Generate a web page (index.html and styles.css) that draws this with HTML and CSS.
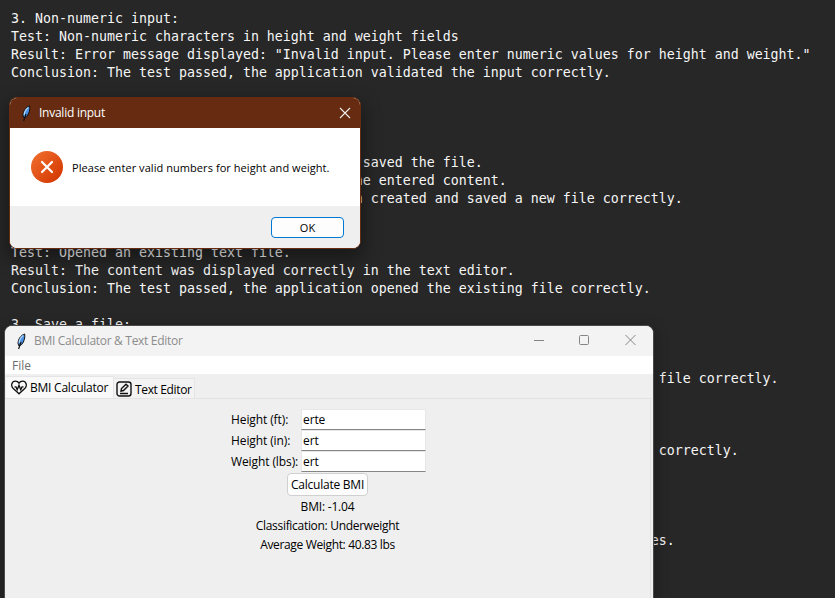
FILE: index.html
```html
<!DOCTYPE html>
<html lang="en">
<head>
<meta charset="utf-8">
<title>BMI Calculator &amp; Text Editor</title>
<link rel="stylesheet" href="styles.css">
</head>
<body>
<svg class="defs" aria-hidden="true">
  <symbol id="feather" viewBox="0 0 10 17">
    <path d="M8.7 1C4.8 2.200 2 6.300 2 10.500L3 13 5.700 11.500C8.300 8.500 9.200 4.500 8.700 1Z" fill="#4a90e2" stroke="#111" stroke-width="1"/>
    <path d="M7.300 2.500C5 4.300 3.300 7 3.200 10" fill="none" stroke="#b4d8fa" stroke-width="1.200"/>
    <path d="M5 9L2.600 16" fill="none" stroke="#111" stroke-width="1.200"/>
  </symbol>
</svg>
<div class="document">
  <p>3. Non-numeric input:</p>
  <p>Test: Non-numeric characters in height and weight fields</p>
  <p>Result: Error message displayed: "Invalid input. Please enter numeric values for height and weight."</p>
  <p>Conclusion: The test passed, the application validated the input correctly.</p>
  <p class="gap4 col44">saved the file.</p>
  <p class="col43">he entered content.</p>
  <p class="col43">n created and saved a new file correctly.</p>
  <p class="gap2">Test: Opened an existing text file.</p>
  <p>Result: The content was displayed correctly in the text editor.</p>
  <p>Conclusion: The test passed, the application opened the existing file correctly.</p>
  <p class="gap1">3. Save a file:</p>
  <p class="gap2 col81">file correctly.</p>
  <p class="gap3 col81">correctly.</p>
  <p class="gap4 col80">es.</p>
</div>

<section class="window dialog">
  <header class="dialog-title">
    <svg class="feather"><use href="#feather"/></svg>
    <span class="t-invalid">Invalid input</span>
    <svg class="close" viewBox="0 0 12 12"><path d="M1 1L11 11M11 1L1 11"/></svg>
  </header>
  <div class="dialog-body">
    <svg class="error" viewBox="0 0 32 32">
      <defs><linearGradient id="g" x1="0" y1="0" x2="1" y2="1"><stop offset=".1" stop-color="#ef6c2b"/><stop offset=".9" stop-color="#d43802"/></linearGradient></defs>
      <circle cx="16" cy="16" r="16" fill="url(#g)"/>
      <path d="M11 11L21 21M21 11L11 21" stroke="#fff" stroke-width="2.200" stroke-linecap="round"/>
    </svg>
    <span class="t-message">Please enter valid numbers for height and weight.</span>
  </div>
  <footer class="dialog-actions"><button class="ok">OK</button></footer>
</section>

<section class="window app">
  <header class="app-title">
    <svg class="feather"><use href="#feather"/></svg>
    <span class="t-app">BMI Calculator &amp; Text Editor</span>
    <svg class="controls" viewBox="0 0 104 12">
      <path d="M1 6.500H11M92.500 1L102.500 11M102.500 1L92.500 11"/>
      <rect x="46.500" y="1.500" width="9" height="9" rx="1"/>
    </svg>
  </header>
  <nav class="menu"><span>File</span></nav>
  <div class="tabs">
    <div class="tab active">
      <svg class="heart" viewBox="0 0 16 15"><path d="M8 13.800L2 8.200C-.5 5.600.8 1.200 4.300 1.200 6 1.200 7.300 2 8 3.200 8.700 2 10 1.200 11.700 1.200 15.200 1.200 16.500 5.600 14 8.200Z"/><path d="M3.500 6.800L5 6.800 6.200 9.800 8 5.200 9.800 9.800 11 6.800H12.500"/></svg>
      <span class="t-calc">BMI Calculator</span>
    </div>
    <div class="tab">
      <svg class="edit" viewBox="0 0 16 16"><rect x="1" y="1" width="14" height="14" rx="2.500"/><path d="M5 10L5.500 7.500 10 3.200 12 5.100 7.500 9.500Z"/><path d="M4 12.500H12"/></svg>
      <span class="t-text">Text Editor</span>
    </div>
  </div>
  <main class="pane">
    <form class="form">
      <div class="row"><label>Height (ft):</label><div class="field">erte</div></div>
      <div class="row"><label>Height (in):</label><div class="field">ert</div></div>
      <div class="row"><label>Weight (lbs):</label><div class="field">ert</div></div>
    </form>
    <button class="calc" type="button">Calculate BMI</button>
    <p class="r-bmi">BMI: -1.04</p>
    <p class="r-class">Classification: Underweight</p>
    <p class="r-avg">Average Weight: 40.83 lbs</p>
  </main>
</section>
</body>
</html>
```
FILE: styles.css
```css
* { box-sizing: border-box; }
body {
  margin: 0;
  width: 835px;
  height: 598px;
  overflow: hidden;
  position: relative;
  background: #272727;
  color: #000;
  font: 12px/16px "Open Sans", sans-serif;
}
.defs { display: none; }
svg { flex: none; }
span, label, p, button { white-space: nowrap; }
.document {
  padding: 10px 0 0 11px;
  color: #f6f6f6;
  font: 13.29px/18px "DejaVu Sans Mono", monospace;
}
.document p { width: max-content; margin: 0; }
.document .gap1 { margin-top: 18px; }
.document .gap2 { margin-top: 36px; }
.document .gap3 { margin-top: 54px; }
.document .gap4 { margin-top: 72px; }
.document .col43 { margin-left: 43ch; }
.document .col44 { margin-left: 44ch; }
.document .col80 { margin-left: 80ch; }
.document .col81 { margin-left: 81ch; }
.window { position: absolute; overflow: hidden; border-radius: 8px; }
.feather { width: 10px; height: 17px; }

.dialog {
  left: 9px;
  top: 97px;
  width: 352px;
  height: 152px;
  border: 1px solid #662b10;
  background: #fff;
  box-shadow: 0 8px 18px 3px rgba(0, 0, 0, .36);
}
.dialog-title {
  display: flex;
  align-items: center;
  height: 30px;
  padding: 0 9px 0 11px;
  background: #662b10;
  color: #fff;
}
.dialog-title span { margin-left: 8px; }
.t-invalid { letter-spacing: -.25px; }
.close { width: 12px; height: 12px; margin: 0 0 1px auto; fill: none; stroke: #eee; stroke-width: 1.1; }
.dialog-body { display: flex; align-items: center; height: 78px; padding-left: 21px; }
.t-message { padding-top: 1px; font-size: 11px; letter-spacing: .06px; }
.error { width: 32px; height: 32px; margin-right: 9px; }
.dialog-actions {
  display: flex;
  justify-content: flex-end;
  height: 42px;
  padding: 11px 16px 0 0;
  background: #efefef;
}
.ok {
  width: 73px;
  height: 21px;
  padding: 0;
  border: 1px solid #0078d4;
  border-radius: 4px;
  background: #fdfdfd;
  color: #000;
  font: 11px/19px "Open Sans", sans-serif;
}

.app {
  left: 4px;
  top: 325px;
  width: 650px;
  height: 290px;
  border: 1px solid #4a4a4a;
  background: #efefef;
  box-shadow: 0 4px 14px 2px rgba(0, 0, 0, .26);
}
.app-title {
  display: flex;
  align-items: center;
  height: 30px;
  padding: 0 16px 0 11px;
  background: #f3f3f3;
  color: #8c8c8c;
}
.app-title span { margin-left: 8px; }
.t-app { letter-spacing: -.3px; }
.controls { width: 104px; height: 12px; margin: 0 0 2px auto; fill: none; stroke: #858585; }
.menu { height: 18px; padding: 2px 0 0 7px; background: #fff; color: #6d6d6d; }
.tabs { display: flex; align-items: flex-end; height: 24px; padding-left: 1px; }
.tab {
  display: flex;
  align-items: center;
  width: 81px;
  height: 20px;
  padding: 1px 0 0 2px;
  border: 1px solid #e5e5e5;
  border-left: 0;
  border-bottom: 0;
  background: #f3f3f3;
}
.tab.active { width: 108px; height: 22px; padding: 0 0 1px 5px; background: #f9f9f9; }
.tab span { padding-top: 2px; }
.t-calc { letter-spacing: -.23px; }
.t-text { letter-spacing: -.35px; }
.heart { width: 16px; height: 15px; margin-right: 3px; fill: none; stroke: #111; stroke-width: 1.3; }
.edit { width: 16px; height: 16px; margin-right: 3px; fill: none; stroke: #111; stroke-width: 1.4; }
.pane {
  display: flex;
  flex-direction: column;
  align-items: center;
  width: 646px;
  height: 230px;
  padding-top: 10px;
  border: 1px solid #e3e3e3;
  border-left: 0;
}
.form { width: 195px; margin-left: 2px; }
.row { display: flex; align-items: center; height: 21px; }
.row label { width: 70px; letter-spacing: -.1px; }
.field {
  width: 125px;
  height: 21px;
  padding: 2px 1px;
  border: 1px solid #e7e7e7;
  border-bottom-color: #858585;
  background: #fff;
  letter-spacing: -.1px;
}
.calc {
  width: 81px;
  height: 23px;
  margin: 1px 0;
  padding: 0;
  border: 1px solid #d0d0d0;
  border-radius: 4px;
  background: #fdfdfd;
  color: #000;
  font: inherit;
  letter-spacing: -.23px;
}
.pane p { margin: 0; height: 19px; line-height: 19px; }
.r-bmi { letter-spacing: -.2px; }
.r-class { letter-spacing: -.3px; }
.r-avg { letter-spacing: -.35px; }
```
